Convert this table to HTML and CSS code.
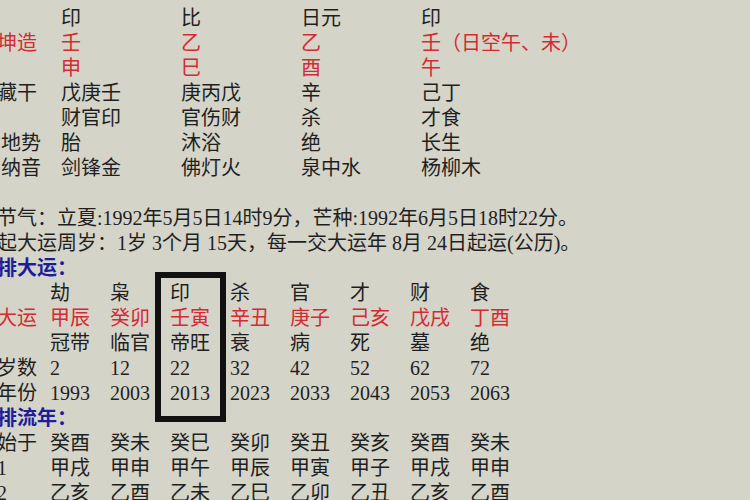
FILE: index.html
```html
<!DOCTYPE html>
<html lang="zh">
<head>
<meta charset="utf-8">
<link rel="stylesheet" href="styles.css">
</head>
<body>
<div class="page">
  <div class="prow"><span></span><span>印</span><span>比</span><span>日元</span><span>印</span></div>
  <div class="prow red"><span>坤造</span><span>壬</span><span>乙</span><span>乙</span><span>壬（日空午、未）</span></div>
  <div class="prow red"><span></span><span>申</span><span>巳</span><span>酉</span><span>午</span></div>
  <div class="prow"><span>藏干</span><span>戊庚壬</span><span>庚丙戊</span><span>辛</span><span>己丁</span></div>
  <div class="prow"><span></span><span>财官印</span><span>官伤财</span><span>杀</span><span>才食</span></div>
  <div class="prow"><span class="ind">地势</span><span>胎</span><span>沐浴</span><span>绝</span><span>长生</span></div>
  <div class="prow"><span class="ind">纳音</span><span>剑锋金</span><span>佛灯火</span><span>泉中水</span><span>杨柳木</span></div>
  <div class="blank"></div>
  <p class="line">节气：立夏:1992年5月5日14时9分，芒种:1992年6月5日18时22分。</p>
  <p class="line">起大运周岁：1岁 3个月 15天，每一交大运年 8月 24日起运(公历)。</p>
  <p class="line head">排大运：</p>
  <div class="yrow"><span></span><span>劫</span><span>枭</span><span>印</span><span>杀</span><span>官</span><span>才</span><span>财</span><span>食</span></div>
  <div class="yrow red"><span>大运</span><span>甲辰</span><span>癸卯</span><span>壬寅</span><span>辛丑</span><span>庚子</span><span>己亥</span><span>戊戌</span><span>丁酉</span></div>
  <div class="yrow"><span></span><span>冠带</span><span>临官</span><span>帝旺</span><span>衰</span><span>病</span><span>死</span><span>墓</span><span>绝</span></div>
  <div class="yrow"><span>岁数</span><span>2</span><span>12</span><span>22</span><span>32</span><span>42</span><span>52</span><span>62</span><span>72</span></div>
  <div class="yrow"><span>年份</span><span>1993</span><span>2003</span><span>2013</span><span>2023</span><span>2033</span><span>2043</span><span>2053</span><span>2063</span></div>
  <p class="line head">排流年：</p>
  <div class="yrow"><span>始于</span><span>癸酉</span><span>癸未</span><span>癸巳</span><span>癸卯</span><span>癸丑</span><span>癸亥</span><span>癸酉</span><span>癸未</span></div>
  <div class="yrow"><span>1</span><span>甲戌</span><span>甲申</span><span>甲午</span><span>甲辰</span><span>甲寅</span><span>甲子</span><span>甲戌</span><span>甲申</span></div>
  <div class="yrow"><span>2</span><span>乙亥</span><span>乙酉</span><span>乙未</span><span>乙巳</span><span>乙卯</span><span>乙丑</span><span>乙亥</span><span>乙酉</span></div>
  <div class="mark"></div>
</div>
</body>
</html>
```

FILE: styles.css
```css
html, body {
  margin: 0;
  padding: 0;
  background: #d5d4c9;
  overflow: hidden;
}

.page {
  position: relative;
  margin-left: -3px;
  padding-top: 6px;
  font-family: "Liberation Serif", "Noto Sans CJK SC", serif;
  font-size: 20px;
  line-height: 25px;
  color: #1f1f1f;
  white-space: nowrap;
}

.prow {
  display: grid;
  grid-template-columns: 64px repeat(3, 120px) 200px;
  height: 25px;
}

.yrow {
  display: grid;
  grid-template-columns: 53px repeat(8, 60px);
  height: 25px;
}

.ind {
  padding-left: 4px;
}

.red {
  color: #d42a32;
}

.blank {
  height: 25px;
}

.line {
  margin: 0;
  height: 25px;
}

.head {
  color: #1c1c9c;
  font-weight: bold;
}

.mark {
  position: absolute;
  left: 158px;
  top: 272px;
  width: 59px;
  height: 138px;
  border: 6px solid #111;
}
```
